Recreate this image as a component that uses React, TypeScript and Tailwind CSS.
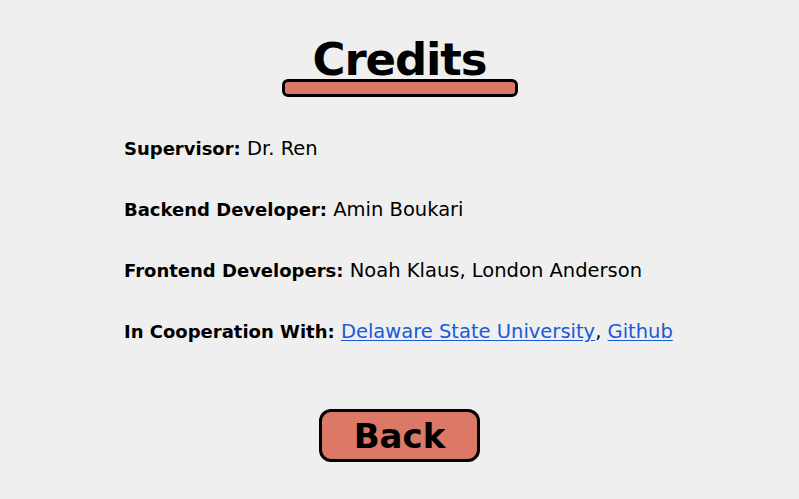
import React from 'react'

const ROWS: { label: string; value: React.ReactNode }[] = [
  { label: 'Supervisor:', value: 'Dr. Ren' },
  { label: 'Backend Developer:', value: 'Amin Boukari' },
  { label: 'Frontend Developers:', value: 'Noah Klaus, London Anderson' },
  {
    label: 'In Cooperation With:',
    value: (
      <>
        <a href="#" className="text-[#1a5ad6] underline underline-offset-2">Delaware State University</a>,{' '}
        <a href="#" className="text-[#1a5ad6] underline underline-offset-2">Github</a>
      </>
    ),
  },
]

export default function App() {
  return (
    <div className="w-[799px] h-[499px] bg-[#efefef] text-black flex flex-col items-center" style={{ fontFamily: '"DejaVu Sans", sans-serif' }}>
      <div className="flex flex-col items-center pt-[37px]">
        <h1 className="text-[45px] leading-[46px] font-black tracking-tight">Credits</h1>
        <div className="w-[236px] h-[18px] -mt-[4px] bg-[#dc7866] border-[3px] border-black rounded-[6px]" />
      </div>
      <div className="self-stretch pl-[124px] pt-[40px] flex flex-col gap-[38px]">
        {ROWS.map(r => (
          <p key={r.label} className="text-[19.5px] leading-[23px]">
            <span className="font-bold text-[18px]">{r.label}</span> {r.value}
          </p>
        ))}
      </div>
      <button className="mt-[66px] w-[161px] h-[53px] bg-[#dc7866] border-[3px] border-black rounded-[12px] text-[34px] font-black leading-none">
        Back
      </button>
    </div>
  )
}
